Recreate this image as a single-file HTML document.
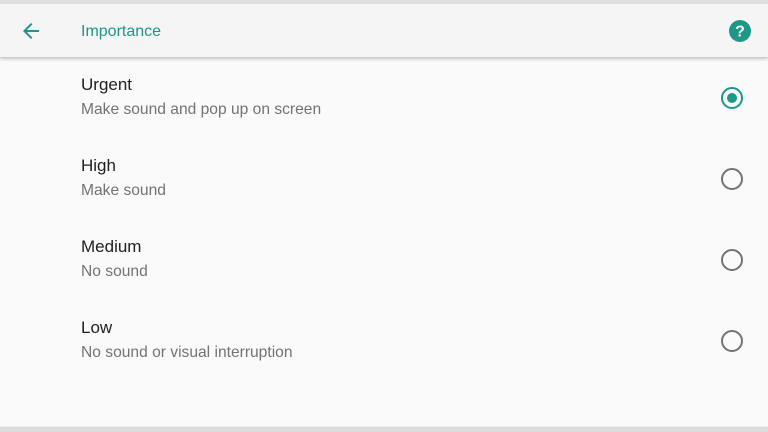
<!DOCTYPE html>
<html><head><style>
body{margin:0;width:768px;height:432px;background:#fafafa;font-family:"Liberation Sans",sans-serif;position:relative;overflow:hidden}
.top{position:absolute;top:0;left:0;width:768px;height:4px;background:#e0e0e0}
.bar{position:absolute;top:4px;left:0;width:768px;height:53px;background:#f5f5f5;box-shadow:0 2px 3px rgba(0,0,0,0.22)}
.title{position:absolute;left:81px;top:19px;font-size:16px;color:#1e9688}
.row{position:absolute;left:81px}
.t{font-size:17px;color:#212121}
.s{font-size:15.6px;color:#737373;margin-top:6px}
.r{position:absolute;left:721px;width:18px;height:18px;border:2px solid #737373;border-radius:50%}
.r.on{border-color:#1e9688}
.r.on:after{content:"";position:absolute;left:4px;top:4px;width:10px;height:10px;border-radius:50%;background:#1e9688}
.bot{position:absolute;bottom:0;left:0;width:768px;height:5px;background:#dcdcdc;border-top:1px solid #ececec}
</style></head><body>
<div class="top"></div>
<div class="bar">
<svg style="position:absolute;left:19px;top:15px" width="24" height="24" viewBox="0 0 24 24"><path d="M20 11H7.8l5.6-5.6L12 4l-8 8 8 8 1.4-1.4L7.8 13H20z" fill="#1e9688"/></svg>
<div class="title">Importance</div>
<svg style="position:absolute;left:728px;top:15px" width="24" height="24" viewBox="0 0 24 24"><circle cx="12" cy="12" r="11" fill="#1e9688"/><text x="12" y="17.5" text-anchor="middle" font-family="Liberation Sans" font-weight="bold" font-size="16" fill="#f5f5f5">?</text></svg>
</div>
<div class="row" style="top:75px"><div class="t">Urgent</div><div class="s">Make sound and pop up on screen</div></div>
<div class="row" style="top:156px"><div class="t">High</div><div class="s">Make sound</div></div>
<div class="row" style="top:237px"><div class="t">Medium</div><div class="s">No sound</div></div>
<div class="row" style="top:318px"><div class="t">Low</div><div class="s">No sound or visual interruption</div></div>
<div class="r on" style="top:87px"></div>
<div class="r" style="top:168px"></div>
<div class="r" style="top:249px"></div>
<div class="r" style="top:330px"></div>
<div class="bot"></div>
</body></html>
